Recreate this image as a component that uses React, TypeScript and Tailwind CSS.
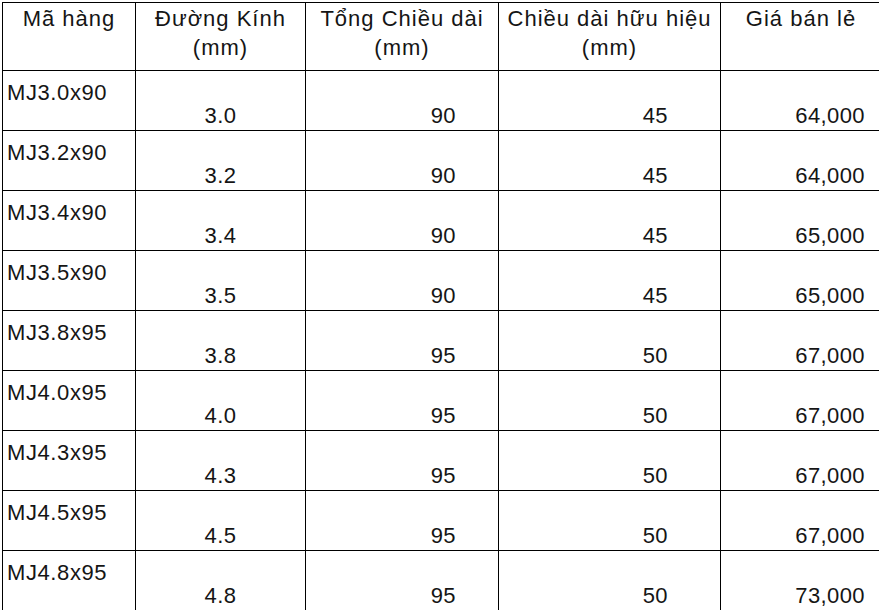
import React from 'react';

const rows = [
  ['MJ3.0x90', '3.0', '90', '45', '64,000'],
  ['MJ3.2x90', '3.2', '90', '45', '64,000'],
  ['MJ3.4x90', '3.4', '90', '45', '65,000'],
  ['MJ3.5x90', '3.5', '90', '45', '65,000'],
  ['MJ3.8x95', '3.8', '95', '50', '67,000'],
  ['MJ4.0x95', '4.0', '95', '50', '67,000'],
  ['MJ4.3x95', '4.3', '95', '50', '67,000'],
  ['MJ4.5x95', '4.5', '95', '50', '67,000'],
  ['MJ4.8x95', '4.8', '95', '50', '73,000'],
];

export default function App() {
  return (
    <div className="w-[879px] h-[610px] overflow-hidden bg-white text-[#151515] text-[22px] leading-[29px]" style={{ fontFamily: '"Liberation Sans", Arial, sans-serif' }}>
      <div className="ml-[2px] mt-[2px] w-[880px] grid grid-cols-[133px_170px_193px_222px_161px] auto-rows-[60px] grid-rows-[68px] border-l border-t border-black">
        {/* header */}
        <div className="border-r border-b border-black text-center pt-[1px] tracking-[1px]">Mã hàng</div>
        <div className="border-r border-b border-black text-center pt-[1px] tracking-[1px]">Đường Kính<br />(mm)</div>
        <div className="border-r border-b border-black text-center pt-[1px] tracking-[1px]">Tổng Chiều dài<br />(mm)</div>
        <div className="border-r border-b border-black text-center pt-[1px] tracking-[1px] whitespace-nowrap">Chiều dài hữu hiệu<br />(mm)</div>
        <div className="border-r border-b border-black text-center pt-[1px] tracking-[1px]">Giá bán lẻ</div>

        {rows.map(r => (
          <React.Fragment key={r[0]}>
            <div className="border-r border-b border-black pl-[4px] pt-[7px] tracking-[0.6px]">{r[0]}</div>
            <div className="border-r border-b border-black flex items-end justify-center tracking-[0.4px]">{r[1]}</div>
            <div className="border-r border-b border-black flex items-end justify-end pr-[42px] tracking-[0.4px]">{r[2]}</div>
            <div className="border-r border-b border-black flex items-end justify-end pr-[52px] tracking-[0.4px]">{r[3]}</div>
            <div className="border-r border-b border-black flex items-end justify-end pr-[16px] tracking-[0.4px]">{r[4]}</div>
          </React.Fragment>
        ))}
      </div>
    </div>
  );
}
